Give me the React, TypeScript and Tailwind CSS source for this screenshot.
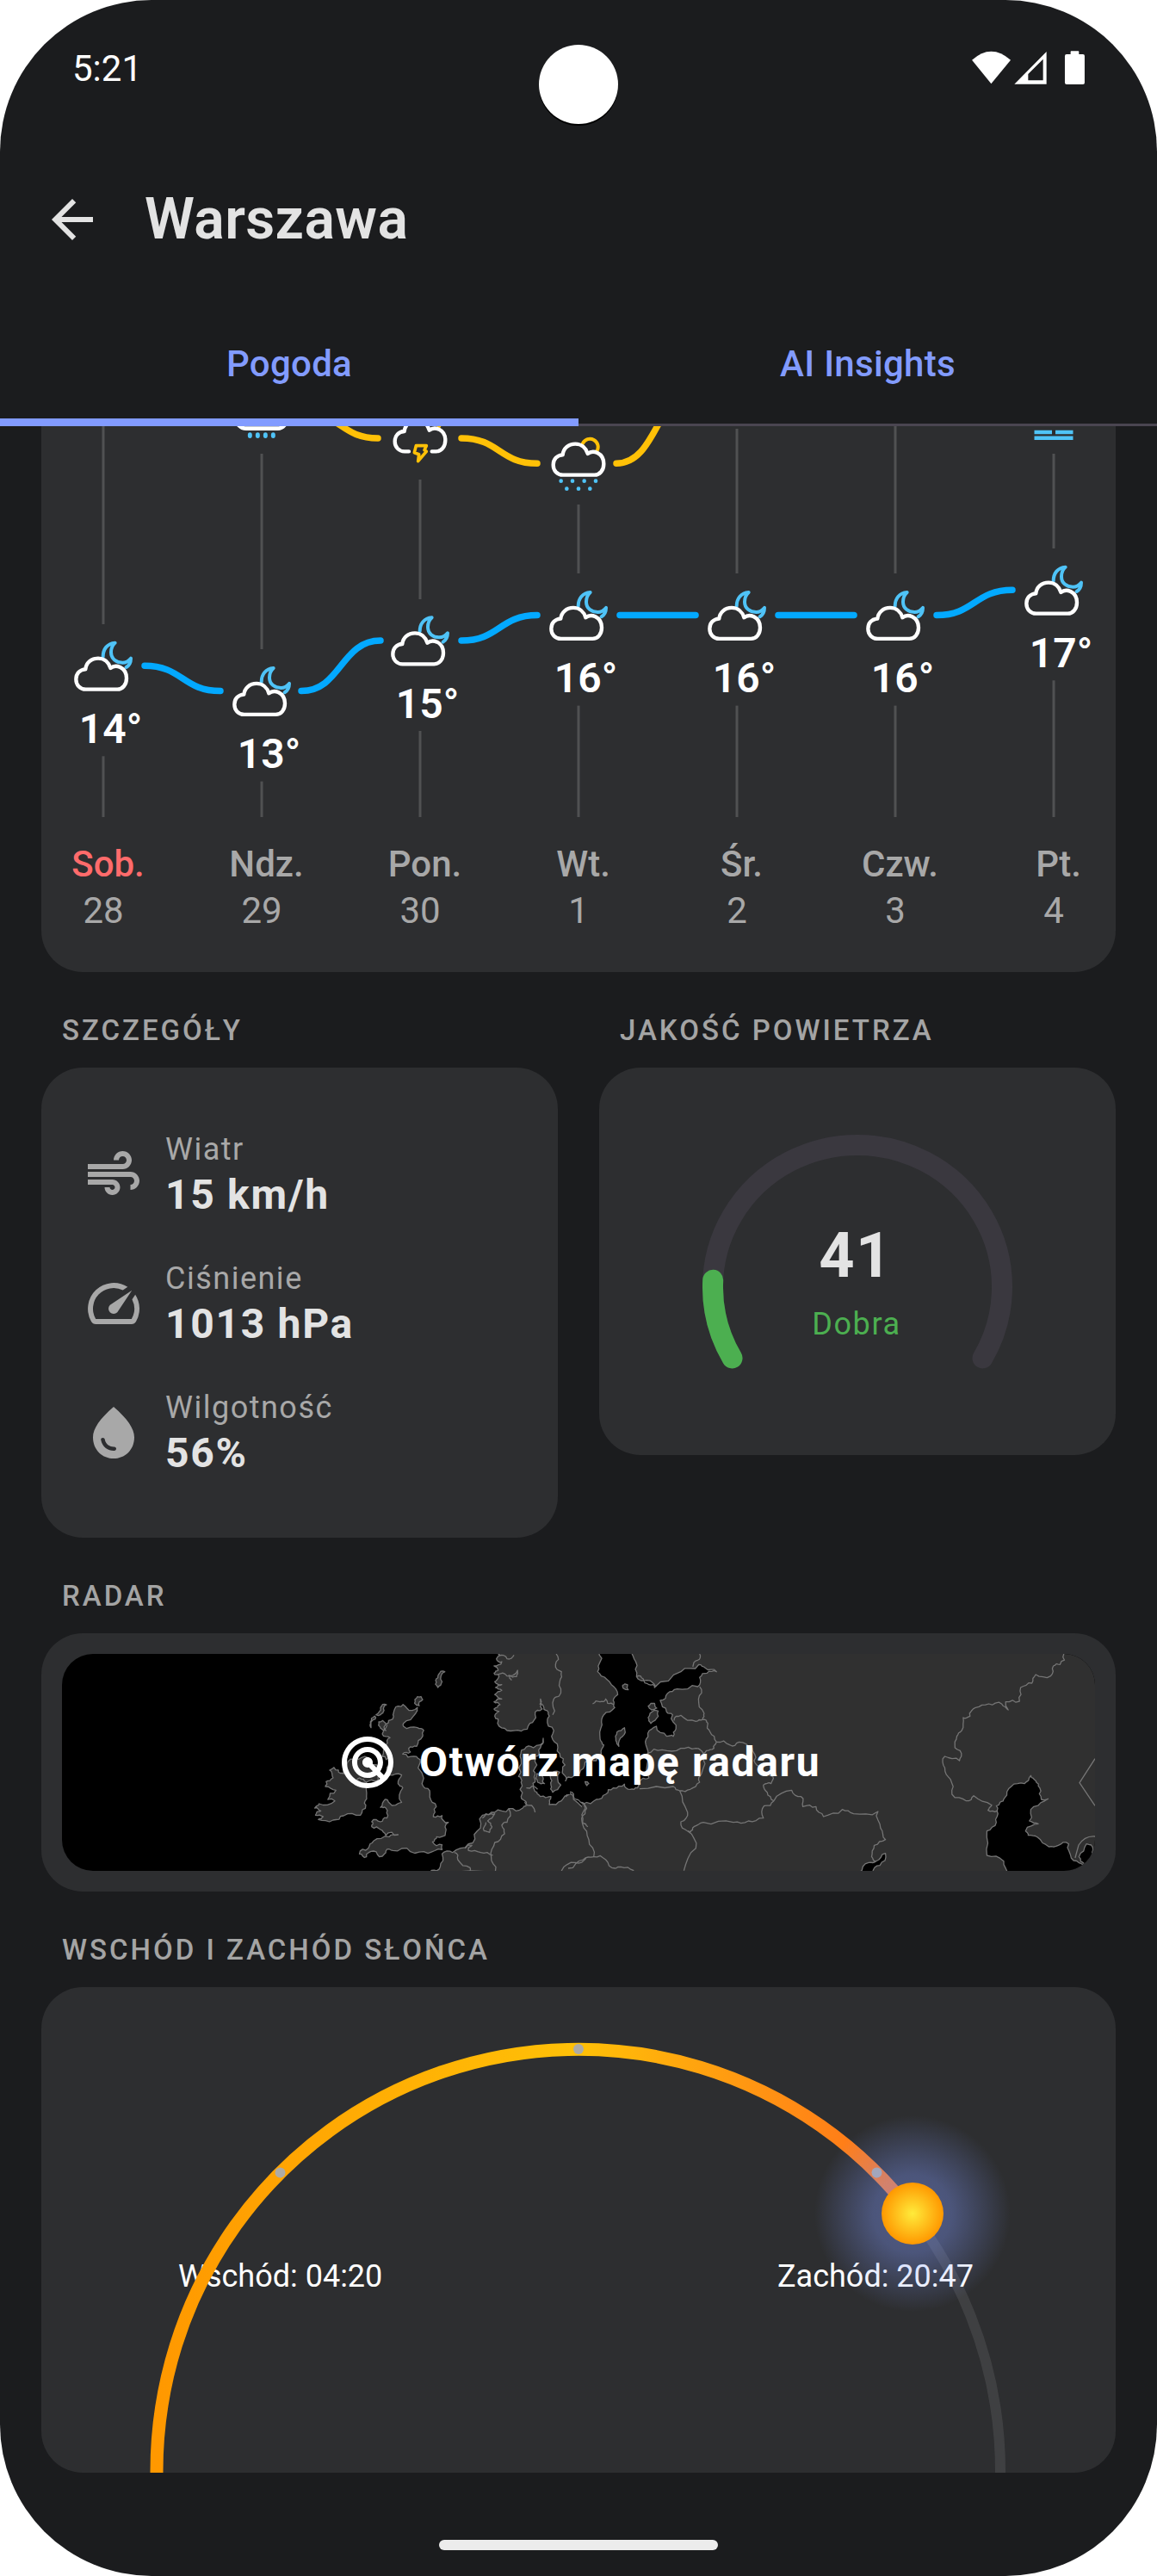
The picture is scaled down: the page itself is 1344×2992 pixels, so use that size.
import type { ReactNode } from "react";
import { MdAir, MdArrowBack, MdRadar, MdSpeed, MdWaterDrop } from "react-icons/md";

type Pt = [number, number];

/* ---------- Status bar ---------- */

function StatusBar() {
  return (
    <div className="flex h-[157px] items-center justify-between pl-[84px] pr-[84px]">
      <span className="mt-0.5 text-[42px] leading-[50px] text-white">5:21</span>
      <svg width="131" height="39.3" viewBox="207 57 393 118" fill="#fff">
        <path d="M207 89Q274 29 342 89L274 172Z" />
        <path fillRule="evenodd" d="M355 173L467 60V173ZM403 160H455V86L403 138Z" />
        <rect x="531" y="69" width="69" height="105" rx="6" />
        <rect x="551" y="58" width="29" height="16" rx="2" />
      </svg>
    </div>
  );
}

/* ---------- Daily chart ---------- */

const days = [
  { name: "Sob.", date: "28", temp: "14°", x: 72, y: 278.3, top: [0, 230] },
  { name: "Ndz.", date: "29", temp: "13°", x: 256, y: 307.6, top: [32, 259] },
  { name: "Pon.", date: "30", temp: "15°", x: 440, y: 249, top: [62, 201] },
  { name: "Wt.", date: "1", temp: "16°", x: 624, y: 219.6, top: [91, 171] },
  { name: "Śr.", date: "2", temp: "16°", x: 808, y: 219.6, top: [3, 171] },
  { name: "Czw.", date: "3", temp: "16°", x: 992, y: 219.6, top: [0, 171] },
  { name: "Pt.", date: "4", temp: "17°", x: 1176, y: 190.3, top: [32, 142] },
];

const cloudPath =
  "M-61 82C-82 82 -95 66 -95 47C-95 27 -82 13 -62 12C-60 -10 -42 -26 -18 -26C3 -26 19 -12 25 8C34 1 48 0 59 5C73 12 81 26 81 43C81 66 67 82 49 82Z";

function NightIcon({ x, y }: { x: number; y: number }) {
  return (
    <g transform={`translate(${x} ${y}) scale(0.3333)`} fill="none" strokeLinecap="round" strokeLinejoin="round">
      <path
        d="M-1 -32C-1 -58 14 -78 41 -80C30 -70 27 -62 27 -47C27 -24 45 -11 67 -11C79 -11 88 -16 96 -26C96 -14 91 -2 80 5"
        stroke="#4fc3f7"
        strokeWidth="12"
      />
      <path d={cloudPath} stroke="#fff" strokeWidth="13" fill="#2d2e30" />
    </g>
  );
}

function DayIcon({ x, y, children }: { x: number; y: number; children: ReactNode }) {
  return (
    <g transform={`translate(${x} ${y}) scale(0.3333)`} fill="none" strokeLinecap="round" strokeLinejoin="round">
      {children}
    </g>
  );
}

function DailyChart() {
  return (
    <svg width="1248" height="482" viewBox="0 0 1248 482" className="block">
      {days.map((d) => (
        <g key={d.date} fill="#fff" fillOpacity="0.17">
          <rect x={d.x - 1.5} y={d.top[0]} width="3" height={d.top[1] - d.top[0]} />
          <rect x={d.x - 1.5} y={d.y + 105} width="3" height={454 - d.y - 105} />
        </g>
      ))}
      <g fill="none" stroke="#ffc107" strokeWidth="7.5" strokeLinecap="round">
        <path d="M304 -15.3C348 -15.3 348 14 391 14" />
        <path d="M488 14C532 14 532 43.3 576 43.3" />
        <path d="M668 43.3C716 43.3 716 -44.7 764 -44.7" />
      </g>
      <g fill="none" stroke="#03a9ff" strokeWidth="7.5" strokeLinecap="round">
        <path d="M120 278.3C164 278.3 164 307.6 208 307.6" />
        <path d="M302 307.6C348 307.6 348 249 394 249" />
        <path d="M488 249C532 249 532 219.6 576 219.6" />
        <path d="M672 219.6H760" />
        <path d="M856 219.6H944" />
        <path d="M1040 219.6C1084 219.6 1084 190.3 1128 190.3" />
      </g>

      <DayIcon x={256} y={-15.3}>
        <path d={cloudPath} transform="translate(7 -28)" stroke="#fff" strokeWidth="14" />
        {[-41, -14, 13, 40].map((cx) => (
          <ellipse key={cx} cx={cx} cy="78" rx="7.5" ry="10" fill="#4fc3f7" />
        ))}
      </DayIcon>
      <DayIcon x={440} y={14}>
        <path d="M15 -64A28 28 0 1 1 64 -38" stroke="#ffc107" strokeWidth="12" />
        <path
          d="M-39 46H-54C-75 46 -88 30 -88 11C-88 -9 -75 -23 -55 -24C-53 -46 -35 -62 -11 -62C10 -62 26 -48 32 -28C41 -35 55 -36 66 -31C80 -24 88 -10 88 7C88 30 74 46 56 46H41"
          stroke="#fff"
          strokeWidth="13"
          fill="#2d2e30"
        />
        <path d="M-14 26H22L15 41L22 46L-7 80L-4 56L-20 50Z" stroke="#ffc107" strokeWidth="11" />
      </DayIcon>
      <DayIcon x={624} y={43.3}>
        <path d="M15 -70A28 28 0 1 1 64 -43" stroke="#ffc107" strokeWidth="12" />
        <path d={cloudPath} transform="translate(7 -42)" stroke="#fff" strokeWidth="13" fill="#2d2e30" />
        {[-61, -21, 20, 60].map((cx) => (
          <circle key={cx} cx={cx} cy="61" r="7" fill="#4fc3f7" />
        ))}
        {[-41, 0, 40].map((cx) => (
          <circle key={cx} cx={cx} cy="88" r="7" fill="#4fc3f7" />
        ))}
      </DayIcon>
      <g stroke="#4fc3f7" strokeWidth="4.6">
        <path d="M1153.5 7H1174M1178 7H1198.5M1153.5 13.7H1198.5" />
      </g>

      {days.map((d) => (
        <g key={d.date}>
          <NightIcon x={d.x} y={d.y} />
          <text x={d.x + 8.5} y={d.y + 89.6} textAnchor="middle" fontSize="48" fontWeight="600" fill="#fff">
            {d.temp}
          </text>
        </g>
      ))}
    </svg>
  );
}

function DailyCard() {
  return (
    <div className="h-[634px] rounded-b-[48px] bg-[#2d2e30]">
      <DailyChart />
      <div className="-mx-5 grid grid-cols-7">
        {days.map((d, i) => (
          <div key={d.date} className="flex flex-col items-center text-[42px] leading-[54px] text-[#a8a8a8]">
            <span className={i === 0 ? "pl-[11px] font-medium text-[#ff6b6b]" : "pl-[11px] font-medium"}>{d.name}</span>
            <span>{d.date}</span>
          </div>
        ))}
      </div>
    </div>
  );
}

/* ---------- Details and air quality ---------- */

function SectionLabel({ children }: { children: ReactNode }) {
  return (
    <div className="flex h-[111px] items-center pl-6 pt-6 text-[33px] font-medium leading-[44px] tracking-[3px] text-[#a4a4a4]">
      {children}
    </div>
  );
}

function DetailRow({ icon, label, value }: { icon: ReactNode; label: string; value: string }) {
  return (
    <div className="flex h-[106px] items-center gap-6">
      <span className="text-[72px] text-[#a8a8a8]">{icon}</span>
      <div>
        <div className="text-[36px] leading-[48px] tracking-[1.5px] text-[#a8a8a8]">{label}</div>
        <div className="text-[48px] font-bold leading-[58px] tracking-[1.7px] text-[#e3e3e3]">{value}</div>
      </div>
    </div>
  );
}

function AirQualityCard() {
  return (
    <div className="relative flex h-[450px] flex-col items-center rounded-[48px] bg-[#2d2e30] pt-[176px]">
      <svg className="absolute inset-0" width="600" height="450" viewBox="0 0 600 450" fill="none" strokeWidth="24" strokeLinecap="round">
        <path d="M154.5 337.4A168 165 0 1 1 445.5 337.4" stroke="#3a383f" />
        <path d="M154.5 337.4A168 165 0 0 1 132.2 246.8" stroke="#4caf50" />
      </svg>
      <span className="mr-1 text-[72px] font-bold leading-[86px] tracking-[1.5px] text-[#e3e3e3]">41</span>
      <span className="mr-0.5 mt-2 text-[36px] leading-[56px] tracking-[1.6px] text-[#4caf50]">Dobra</span>
    </div>
  );
}

/* ---------- Radar map ---------- */

/* Coordinates come from two map sheets with their own scales. */
const west = ([x, y]: Pt): Pt => [x * 0.40816 - 32, y / 3 - 111];
const east = ([x, y]: Pt): Pt => [x * 0.43622 + 588, y / 3 - 61];

function parse(s: string): Pt[] {
  return s.split(" ").map((p) => p.split(",").map(Number) as Pt);
}

/* Splits each edge and shifts the new points slightly, for a natural coast. */
function rough(pts: Pt[], closed: boolean, amount: number): string {
  let seed = 7;
  const rnd = () => {
    seed = (seed * 16807) % 2147483647;
    return seed / 2147483647 - 0.5;
  };
  let cur = closed ? [...pts, pts[0]] : pts;
  for (let n = 0; n < 2; n++) {
    const next: Pt[] = [cur[0]];
    for (let i = 1; i < cur.length; i++) {
      const [ax, ay] = cur[i - 1];
      const [bx, by] = cur[i];
      const len = Math.hypot(bx - ax, by - ay);
      if (len > 3) {
        const k = (rnd() * amount * Math.min(len, 12)) / len;
        next.push([(ax + bx) / 2 - (by - ay) * k, (ay + by) / 2 + (bx - ax) * k]);
      }
      next.push(cur[i]);
    }
    cur = next;
  }
  return "M" + cur.map(([x, y]) => `${x.toFixed(1)} ${y.toFixed(1)}`).join("L") + (closed ? "Z" : "");
}

const westLand = [
  "840,738 865,738 880,750 890,715 905,700 940,690 975,720 985,755 975,775 945,780 945,830 943,860 928,895 880,897 850,912 808,910 822,900 800,895 815,880 798,870 810,855 855,845 835,840 858,808 828,795 830,778 850,765",
  "1035,515 1060,522 1090,520 1085,540 1050,575 1050,585 1090,590 1108,600 1105,620 1088,655 1065,662 1070,675 1048,682 1080,690 1098,710 1103,785 1125,810 1132,850 1140,885 1135,900 1160,896 1178,920 1170,955 1145,970 1133,988 1160,998 1160,1015 1120,1028 1070,1022 1020,1018 1000,1020 990,1038 965,1020 945,1040 925,1030 950,1010 965,985 1010,970 1035,963 1000,965 985,945 960,935 960,918 985,918 1003,905 1000,870 985,868 998,840 1010,852 1045,850 1048,800 1035,785 1045,755 1010,755 1003,740 1015,700 990,690 1000,650 1012,625 990,612 1000,590 1008,565 1020,560 1022,540",
  "985,520 1002,510 995,530 985,545 972,545",
  "968,550 970,560 958,590 956,570",
  "980,570 1000,575 1000,600 985,592",
  "1090,482 1105,492 1095,514 1082,505",
  "1150,405 1168,395 1160,430 1148,450 1142,425",
  "1318,320 1315,350 1330,360 1308,375 1320,390 1308,400 1322,410 1310,430 1330,440 1312,450 1330,460 1310,475 1330,490 1308,500 1325,510 1308,525 1322,533 1310,550 1318,575 1345,600 1385,602 1410,575 1425,545 1445,525 1440,490 1450,520 1462,535 1465,550 1460,560 1478,600 1480,640 1495,680 1510,720 1508,755 1515,770 1568,765 1590,740 1590,320",
  "1395,665 1420,660 1448,627 1440,660 1425,690 1430,720 1420,740 1425,770 1420,800 1430,815 1440,830 1470,830 1465,858 1500,845 1525,820 1540,845 1568,865 1590,860 1590,1100 1125,1100 1130,1087 1155,1075 1160,1030 1190,1025 1235,995 1260,950 1275,895 1310,885 1350,872 1390,870 1400,850 1385,830 1385,780 1378,760 1385,700",
  "1430,750 1448,765 1452,785 1432,780",
  "1468,760 1495,745 1498,790 1475,815 1470,790",
];

const westBorders = [
  "1485,333 1483,370 1500,395 1495,430 1493,480 1478,490 1475,545",
  "1318,405 1345,410 1375,390 1372,412 1350,408 1358,425",
  "1322,340 1345,350 1365,337",
  "1350,872 1345,920 1330,930 1338,960 1310,990 1300,1040 1312,1089",
  "1195,1025 1205,1050 1240,1078 1240,1089",
  "1225,1010 1245,1000 1235,1018 1270,1025 1305,1035",
  "1275,905 1300,890 1310,890 1290,915 1302,935 1295,955 1280,950 1285,920",
  "1400,800 1432,805",
  "1395,850 1425,885",
  "1555,850 1568,870 1560,920 1575,935",
  "1500,1089 1540,1060 1570,1045",
  "890,760 905,772 925,765 945,780",
];

const eastWater = [
  "85,170 80,225 88,260 115,290 132,325 120,345 124,370 95,395 90,430 85,480 95,500 88,530 75,555 45,560 30,600 0,612 -5,620 -5,680 10,665 22,690 40,705 75,690 100,672 120,650 150,637 165,655 185,650 195,620 215,615 208,590 207,500 212,460 235,435 262,470 280,470 287,445 278,395 262,385 245,345 265,320 290,305 345,297 350,265 370,250 395,245 365,232 348,220 300,245 230,300 210,275 182,262 180,210 170,170",
  "845,878 830,920 810,945 775,945 800,910 820,905",
  "1142,730 1150,700 1162,685 1180,645 1215,635 1232,607 1245,625 1256,650 1260,690 1278,688 1240,715 1228,765 1252,775 1218,800 1225,815 1250,822 1280,855 1305,850 1333,845 1340,895 1368,915 1405,930 1405,950 1168,950 1160,905 1115,885 1115,800 1140,770",
  "1380,845 1398,865 1405,900 1375,915 1360,890",
];

const eastIslands = [
  "150,440 145,470 135,505 127,485 130,455",
  "218,390 240,382 240,400 220,425 213,405",
  "213,365 230,355 236,372 222,378",
  "145,292 158,290 160,308 147,303",
  "45,628 55,635 50,642",
];

const eastBorders = [
  "350,183 345,205 332,228",
  "182,262 200,270 215,290 235,295",
  "65,357 85,350 100,340 105,355 122,360",
  "350,297 347,340 362,390 358,412",
  "282,415 300,397 340,418 358,412",
  "358,412 372,425 378,455 395,490",
  "210,530 250,517 300,512 340,512 360,530 368,520 388,512 395,490",
  "395,490 430,500 455,490 490,510 495,555 515,580 545,610 540,635 520,640 530,665 548,695",
  "548,695 595,658 620,680 625,715 660,715 680,750 730,725 760,740 825,732 832,790 845,830 815,850 808,890 820,905",
  "548,695 522,712 520,755 480,765 440,770 360,770 335,785 325,805 318,800",
  "318,800 300,768 318,735 297,660 280,645 190,653",
  "360,530 355,600 350,630 325,655 297,660",
  "318,800 340,860 308,938",
  "40,705 45,740 38,775 55,830 68,890 40,900 0,930",
  "68,890 100,900 125,930 140,925 175,938",
  "1320,183 1310,220 1292,225 1285,260 1245,255 1235,285 1205,300 1202,348 1165,350 1172,378 1155,358 1120,357 1085,370 1070,400 1052,405 1048,450 1035,470 1030,510 1047,540 1042,555 1003,540 1003,580 1018,620 1022,672 1060,695 1080,677 1128,710 1118,728 1142,730",
];

function RadarMap() {
  return (
    <svg className="absolute inset-0" width="1200" height="252" viewBox="0 0 1200 252" stroke="#757575" strokeWidth="1.3" strokeLinejoin="round">
      <g fill="#303030">
        {westLand.map((s) => (
          <path key={s} d={rough(parse(s).map(west), true, 0.6)} />
        ))}
      </g>
      <rect x="604" y="-4" width="600" height="260" fill="#303030" stroke="none" />
      <g fill="#000">
        {eastWater.map((s) => (
          <path key={s} d={rough(parse(s).map(east), true, 0.5)} />
        ))}
        <rect x="581" y="148" width="9" height="15" stroke="none" />
      </g>
      <g fill="#303030">
        {eastIslands.map((s) => (
          <path key={s} d={rough(parse(s).map(east), true, 0.4)} />
        ))}
      </g>
      <g fill="none">
        {westBorders.map((s) => (
          <path key={s} d={rough(parse(s).map(west), false, 0.5)} />
        ))}
        {eastBorders.map((s) => (
          <path key={s} d={rough(parse(s).map(east), false, 0.5)} />
        ))}
        <path d="M1200 121.7L1182 149.7L1200 176.3M1176.9 237L1181 222Q1188 211 1200 212" />
      </g>
    </svg>
  );
}

function RadarCard() {
  return (
    <div className="rounded-[48px] bg-[#2d2e30] p-6">
      <div className="relative flex h-[252px] items-center overflow-hidden rounded-[36px] bg-black pl-[319px]">
        <RadarMap />
        <MdRadar className="relative text-[72px] text-white" />
        <span className="relative ml-6 text-[48px] font-bold leading-[60px] tracking-[1.6px] text-white">Otwórz mapę radaru</span>
      </div>
    </div>
  );
}

/* ---------- Sunrise and sunset ---------- */

function SunCard() {
  return (
    <div className="relative h-[564px] overflow-hidden rounded-[48px] bg-[#2d2e30]">
      <div className="flex justify-between pl-[159px] pr-[165px] pt-[312px] text-[36px] leading-[48px] text-white">
        <span>Wschód: 04:20</span>
        <span>Zachód: 20:47</span>
      </div>
      <svg className="absolute inset-0" width="1248" height="564" viewBox="0 0 1248 564" fill="none">
        <defs>
          <linearGradient id="arc" gradientUnits="userSpaceOnUse" x1="134" y1="0" x2="1114" y2="0">
            <stop offset="0" stopColor="#ff9800" />
            <stop offset="0.5" stopColor="#ffc107" />
            <stop offset="1" stopColor="#ff5722" />
          </linearGradient>
          <radialGradient id="glow">
            <stop offset="0" stopColor="#829bff" stopOpacity="0.42" />
            <stop offset="0.4" stopColor="#829bff" stopOpacity="0.36" />
            <stop offset="0.6" stopColor="#829bff" stopOpacity="0.24" />
            <stop offset="1" stopColor="#829bff" stopOpacity="0" />
          </radialGradient>
          <radialGradient id="sun">
            <stop offset="0" stopColor="#ffeb3b" />
            <stop offset="1" stopColor="#ff9800" />
          </radialGradient>
        </defs>
        <path d="M134 564V562A490 490 0 0 1 1114 562V564" stroke="#fff" strokeOpacity="0.09" strokeWidth="12" />
        <path d="M134 564V562A490 490 0 0 1 1012 263" stroke="url(#arc)" strokeWidth="15" />
        <g fill="#aeaba4">
          <circle cx="277.5" cy="215.5" r="6" />
          <circle cx="624" cy="72" r="6" />
          <circle cx="970.5" cy="215.5" r="6" />
        </g>
        <circle cx="1012" cy="263" r="114" fill="url(#glow)" />
        <circle cx="1012" cy="263" r="36" fill="url(#sun)" />
      </svg>
    </div>
  );
}

/* ---------- Page ---------- */

export default function App() {
  return (
    <div className="bg-white">
      <div className="relative flex h-[2992px] w-[1344px] flex-col overflow-hidden rounded-[176px] bg-[#1b1c1e] font-['Roboto',sans-serif]">
        <div className="absolute left-[626px] top-[52px] size-[92px] rounded-full bg-white shadow-[0_2px_0_#000]" />
        <StatusBar />
        <header className="flex h-[194px] items-center pl-12 pt-0.5 text-[#e3e3e3]">
          <MdArrowBack className="text-[72px]" />
          <h1 className="ml-12 text-[66px] font-semibold leading-[80px] tracking-[0.4px]">Warszawa</h1>
        </header>
        <nav className="grid h-36 shrink-0 grid-cols-2 text-[42px] font-medium leading-[60px] tracking-[0.3px] text-[#829bff]">
          <div className="flex items-center justify-center border-b-[9px] border-[#829bff] pt-[9px]">Pogoda</div>
          <div className="flex items-center justify-center border-b-[3px] border-[#4a4551] pt-[3px]">AI Insights</div>
        </nav>
        <main className="px-12">
          <DailyCard />
          <div className="grid grid-cols-2 items-start gap-12">
            <section>
              <SectionLabel>SZCZEGÓŁY</SectionLabel>
              <div className="flex h-[546px] flex-col gap-11 rounded-[48px] bg-[#2d2e30] pl-12 pt-[71px]">
                <DetailRow icon={<MdAir />} label="Wiatr" value="15 km/h" />
                <DetailRow icon={<MdSpeed />} label="Ciśnienie" value="1013 hPa" />
                <DetailRow icon={<MdWaterDrop />} label="Wilgotność" value="56%" />
              </div>
            </section>
            <section>
              <SectionLabel>JAKOŚĆ POWIETRZA</SectionLabel>
              <AirQualityCard />
            </section>
          </div>
          <section>
            <SectionLabel>RADAR</SectionLabel>
            <RadarCard />
          </section>
          <section>
            <SectionLabel>WSCHÓD I ZACHÓD SŁOŃCA</SectionLabel>
            <SunCard />
          </section>
        </main>
        <div className="mx-auto mt-[78px] h-3 w-[324px] shrink-0 rounded-full bg-[#ececec]" />
      </div>
    </div>
  );
}
